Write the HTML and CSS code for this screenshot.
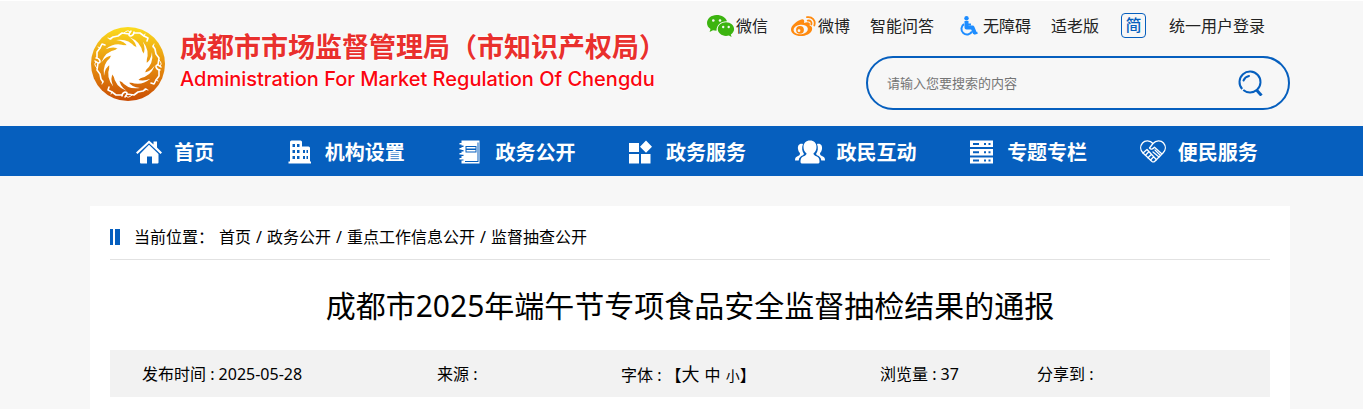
FILE: index.html
```
<!DOCTYPE html>
<html lang="zh-CN">
<head>
    <meta charset="UTF-8">
    <meta name="viewport" content="width=device-width, initial-scale=1.0">
    <title>成都市2025年端午节专项食品安全监督抽检结果的通报</title>
    <link rel="stylesheet" href="styles.css">
</head>
<body>
    <header class="header">
        <div class="container header-inner">
            <a class="logo" href="#">
                <svg class="logo-mark" viewBox="-38 -38 76 76" aria-hidden="true">
                    <defs>
                        <linearGradient id="gold" x1="0" y1="0" x2="0" y2="1">
                            <stop offset="0" stop-color="#fbdc1e"/>
                            <stop offset="0.5" stop-color="#e8920f"/>
                            <stop offset="1" stop-color="#c94c04"/>
                        </linearGradient>
                        <path id="ray" d="M7 -17Q0 -26 -12 -24Q-3 -23 0 -17z"/>
                        <g id="bird" fill="none" stroke="#fff" stroke-linecap="round" stroke-linejoin="round">
                            <path stroke-width="1.6" d="M-18 -25L-15 -27L-10 -28L-6 -31L1 -30M3 -33Q-1 -28 3 -28Q6 -29 6 -32M6 -31L12 -31L16 -28L20 -26L19 -23"/>
                            <path stroke-width="1" d="M-4 -31Q0 -35 2 -32M-17 -25L-20 -26M16 -28L17 -30"/>
                        </g>
                    </defs>
                    <circle r="37" fill="url(#gold)"/>
                    <circle r="19" fill="#fff"/>
                    <g fill="#fff">
                        <use href="#ray"/>
                        <use href="#ray" transform="rotate(30)"/>
                        <use href="#ray" transform="rotate(60)"/>
                        <use href="#ray" transform="rotate(90)"/>
                        <use href="#ray" transform="rotate(120)"/>
                        <use href="#ray" transform="rotate(150)"/>
                        <use href="#ray" transform="rotate(180)"/>
                        <use href="#ray" transform="rotate(210)"/>
                        <use href="#ray" transform="rotate(240)"/>
                        <use href="#ray" transform="rotate(270)"/>
                        <use href="#ray" transform="rotate(300)"/>
                        <use href="#ray" transform="rotate(330)"/>
                    </g>
                    <use href="#bird"/>
                    <use href="#bird" transform="rotate(90)"/>
                    <use href="#bird" transform="rotate(180)"/>
                    <use href="#bird" transform="rotate(270)"/>
                </svg>
                <span class="logo-text">
                    <span class="logo-cn">成都市市场监督管理局（市知识产权局）</span>
                    <span class="logo-en">Administration For Market Regulation Of Chengdu</span>
                </span>
            </a>
            <div class="header-tools">
                <div class="top-links">
                    <a href="#">
                        <svg width="28" height="22" viewBox="0 0 28 22" aria-hidden="true">
                            <path fill="#3cb410" d="M9.500 0C4.300 0 0 3.600 0 8c0 2.500 1.300 4.600 3.500 6l-.9 2.900 3.400-1.700c1.200.3 2.300.5 3.500.5C9.300 10 14 6 20 6.200 19 2.600 14.700 0 9.500 0z"/>
                            <path fill="#3cb410" d="M19 7.200c-4.600 0-8.200 3-8.200 6.800s3.600 6.900 8.200 6.900c1 0 2-.2 2.900-.5L24.600 22l-.8-2.500c2-1.300 3.300-3.200 3.300-5.500 0-3.800-3.500-6.800-8.100-6.800z"/>
                            <g fill="#f7f7f7"><circle cx="6.300" cy="5.500" r="1.300"/><circle cx="13" cy="5.500" r="1.300"/><circle cx="16.200" cy="12" r="1.200"/><circle cx="21.700" cy="12" r="1.200"/></g>
                        </svg>
                        微信
                    </a>
                    <a href="#" class="link-weibo">
                        <svg width="25" height="20" viewBox="0 0 25 20" aria-hidden="true">
                            <path fill="#ff8a0f" d="M9 4C12 2.500 14 3.500 13 7c4-1.500 7-.5 5.600 2.600 2 .6 3 2 2.400 4.300C20 17.500 15 20 9.600 20 4.500 20 0 17.600 0 13.500 0 10 4.500 6 9 4z"/>
                            <ellipse cx="9.700" cy="13.500" rx="7.200" ry="4.800" fill="#f7f7f7" transform="rotate(-8 9.700 13.500)"/>
                            <circle cx="9" cy="13.800" r="3.900" fill="#ff8a0f"/>
                            <circle cx="8" cy="14.700" r="1.400" fill="#f7f7f7"/>
                            <path fill="none" stroke="#ff8a0f" stroke-width="1.800" stroke-linecap="round" d="M16 1.200C21 .2 25 4.500 23.300 9.500M16.700 4.600c2.600-.5 4.300 1.500 3.600 3.900"/>
                        </svg>
                        微博
                    </a>
                    <a href="#">智能问答</a>
                    <a href="#" class="link-access">
                        <svg width="19" height="20" viewBox="0 0 19 20" aria-hidden="true">
                            <circle cx="7.500" cy="2.200" r="2.200" fill="#1e8dff"/>
                            <path fill="none" stroke="#1e8dff" stroke-width="4" stroke-linejoin="round" d="M7.500 5v6.500h6l2.500 6"/>
                            <path fill="none" stroke="#1e8dff" stroke-width="2" d="M7 8.500h5M5 8.200a5.600 5.600 0 1 0 8 7.300M15 17.800l3.500-1"/>
                        </svg>
                        无障碍
                    </a>
                    <a href="#">适老版</a>
                    <button type="button" class="lang-btn">简</button>
                    <a href="#">统一用户登录</a>
                </div>
                <form class="search">
                    <input type="text" aria-label="搜索" placeholder="请输入您要搜索的内容">
                    <button type="submit" aria-label="搜索">
                        <svg width="26" height="26" viewBox="0 0 26 26" fill="none" stroke="#065fbe" stroke-width="2" aria-hidden="true">
                            <circle cx="12" cy="12" r="10.500" stroke-dasharray="64 2" transform="rotate(138 12 12)"/>
                            <path stroke-linecap="round" d="M5.500 10.500Q7 6.800 11 6"/>
                            <path stroke-width="3" d="M18.500 20L23.500 25.500"/>
                        </svg>
                    </button>
                </form>
            </div>
        </div>
    </header>

    <nav class="nav">
        <div class="container nav-list">
            <a href="#">
                <svg viewBox="0 0 26 24" fill="#fff" aria-hidden="true">
                    <path d="M13 4.800L22.500 14v8.500q0 1-1 1H16v-7h-5v7H5q-1 0-1-1V14z"/>
                    <path d="M0 12.500L13 .5l4.500 4V1.500h3.500v6l5 5-1.500 1.500L13 3.200 1.500 14z"/>
                </svg>
                <span>首页</span>
            </a>
            <a href="#">
                <svg viewBox="0 0 26 24" fill="#fff" aria-hidden="true">
                    <path fill-rule="evenodd" d="M3 2q0-1.500 1.500-1.500h9Q15 .5 15 2v4.500h6.500Q23 6.500 23 8v13.500h1v2H1.500v-2H3zM5.500 4v3H8V4zM10 4v3h2.500V4zM5.500 10v3H8v-3zM10 10v3h2.500v-3zM5.500 16v3H8v-3zM10 16v3h2.500v-3zM16 10v3h2v-3zM19.500 10v3H21v-3zM16 16v3h2v-3zM19.500 16v3H21v-3z"/>
                </svg>
                <span>机构设置</span>
            </a>
            <a href="#">
                <svg viewBox="0 0 26 24" fill="#fff" aria-hidden="true">
                    <path fill-rule="evenodd" d="M4.500.5h18v23h-18v-3h2v-1.500h-2V16h2v-1.500h-2v-3h2V10h-2V7h2V5.500h-2zM8.500 6v6.500h11V6z"/>
                    <path d="M9.500 7h9v1.500h-9zM9.500 10h9v1.500h-9zM2.500 3H7v1.500H2.500zM2.500 8H7v1.500H2.500zM2.500 13H7v1.500H2.500zM2.500 18H7v1.500H2.500z"/>
                    <path fill="#065fbe" d="M20.500 2.500h1v19.500H8V21h12.500z"/>
                </svg>
                <span>政务公开</span>
            </a>
            <a href="#">
                <svg viewBox="0 0 26 24" fill="#fff" aria-hidden="true">
                    <path d="M1 3h10v9H1zM1 14h10v9.500H1zM13 14h9.500v9.500H13zM18 .5l6 6.200-6 6-6-6z"/>
                </svg>
                <span>政务服务</span>
            </a>
            <a href="#">
                <svg class="icon-wide" viewBox="0 0 30 24" fill="#fff" aria-hidden="true">
                    <path d="M15 .5c4 0 6.500 2.600 6.500 6.500 0 3-1.200 5-3 6.300 0 2 1.500 2.400 3.500 3.200 2.200 1 2.500 3 2.500 5.500 0 1-1 1.500-2 1.500h-15c-1 0-2-.5-2-1.500 0-2.500.3-4.500 2.500-5.500 2-.8 3.500-1.200 3.500-3.200-1.800-1.300-3-3.300-3-6.300 0-3.900 2.500-6.500 6.500-6.500z"/>
                    <path d="M8 4C4 3 2.500 6 3 9c.3 2 1 3 2 4.200 0 2-1 2.300-2.500 3C.5 17.200 0 18 0 20.500h3.700c.3-3 1.800-4.200 4.300-5.300l1-1.200C7 11 6.500 8 8 4zM22 4c4-1 5.500 2 5 5-.3 2-1 3-2 4.200 0 2 1 2.300 2.500 3 2 1 2.500 1.800 2.500 4.300h-3.700c-.3-3-1.800-4.200-4.300-5.300L21 14c2-3 2.500-6 1-10z"/>
                </svg>
                <span>政民互动</span>
            </a>
            <a href="#">
                <svg viewBox="0 0 26 24" fill="#fff" aria-hidden="true">
                    <path fill-rule="evenodd" d="M1 .5h23v6.500H1zM4 3v2h6V3zM15 3v2h2V3zM19.500 3v2h2V3zM1 9h23v6.500H1zM4 11.200v2h6v-2zM15 11.200v2h2v-2zM19.500 11.200v2h2v-2zM1 17.500h23v6H1zM4 19.500v2h6v-2zM15 19.500v2h2v-2zM19.500 19.500v2h2v-2z"/>
                </svg>
                <span>专题专栏</span>
            </a>
            <a href="#">
                <svg viewBox="0 0 26 24" fill="none" stroke="#fff" stroke-width="1.300" stroke-linecap="round" stroke-linejoin="round" aria-hidden="true">
                    <path d="M13 3.500C10 0 5 0 2.500 3S0 10 3 13l9 8.500q1.500 1 2.800-.3L23 13c3-3 3-7 .5-10S16 0 13 3.500L9.500 8q2 2.500 5-.7L22 14"/>
                    <path d="M3 13l4-3.500 9.500 10.300M5.500 15.200L8.500 12M8 17.700l3-3M10.500 20l3-3M13 12l6 5M15 10l5.500 5.500"/>
                </svg>
                <span>便民服务</span>
            </a>
        </div>
    </nav>

    <main class="main">
        <div class="container content">
            <div class="breadcrumb">
                <span class="breadcrumb-mark"></span>
                <span class="breadcrumb-label">当前位置：</span>
                <a href="#">首页</a><span class="slash">/</span><a href="#">政务公开</a><span class="slash">/</span><a href="#">重点工作信息公开</a><span class="slash">/</span><a href="#">监督抽查公开</a>
            </div>
            <h1>成都市2025年端午节专项食品安全监督抽检结果的通报</h1>
            <div class="meta">
                <span>发布时间 : 2025-05-28</span>
                <span>来源 :</span>
                <span class="font-size">字体 : 【<button type="button" class="size-l">大</button><button type="button" class="size-m">中</button><button type="button" class="size-s">小</button>】</span>
                <span>浏览量 : 37</span>
                <span>分享到 :</span>
            </div>
        </div>
    </main>
</body>
</html>
```
FILE: styles.css
```
* {
    box-sizing: border-box;
}

body {
    margin: 0;
    background: #f7f7f7;
    color: #000;
    font-family: "Noto Sans", "Noto Sans CJK SC", sans-serif;
    font-size: 16px;
    line-height: 24px;
}

a {
    color: inherit;
    text-decoration: none;
}

button {
    padding: 0;
    border: 0;
    background: none;
    color: inherit;
    font-family: inherit;
    cursor: pointer;
}

svg {
    flex: none;
}

.header,
.nav,
.main {
    padding-left: 17px;
}

.container {
    max-width: 1200px;
    margin: 0 auto;
}

/* Header */
.header {
    border-top: 1px solid #fff;
}

.header-inner {
    display: flex;
    justify-content: space-between;
    height: 125px;
}

.logo {
    display: flex;
    align-items: center;
    gap: 14px;
    white-space: nowrap;
}

.logo-mark {
    width: 76px;
    height: 76px;
}

.logo-text {
    display: flex;
    flex-direction: column;
    padding-bottom: 4px;
    text-shadow: 0 0 2px #fff, 0 0 3px #fff;
}

.logo-cn {
    color: #e9302d;
    font-size: 27px;
    font-weight: 700;
    line-height: 34px;
}

.logo-en {
    color: #fb0510;
    font-family: Inter, sans-serif;
    font-size: 20px;
    font-weight: 500;
    line-height: 30px;
}

.header-tools {
    display: flex;
    flex-direction: column;
    align-items: flex-end;
}

.top-links {
    display: flex;
    align-items: center;
    gap: 20px;
    height: 49px;
    padding-right: 25px;
    color: #222;
    white-space: nowrap;
}

.top-links a {
    display: flex;
    align-items: center;
    gap: 1px;
}

.top-links .link-weibo {
    padding-left: 3px;
    gap: 2px;
}

.top-links .link-access {
    padding-left: 5px;
    gap: 5px;
}

.lang-btn {
    width: 25px;
    height: 25px;
    margin: 0 3px 0 2px;
    border: 1px solid #065fbe;
    border-radius: 4px;
    color: #065fbe;
    font-size: 16px;
    font-weight: 500;
    line-height: 23px;
}

.search {
    display: flex;
    align-items: center;
    width: 424px;
    height: 54px;
    margin-top: 6px;
    padding: 0 24px 0 19px;
    border: 2px solid #065fbe;
    border-radius: 27px;
}

.search input {
    flex: 1;
    min-width: 0;
    padding: 0;
    border: 0;
    outline: 0;
    background: none;
    font-family: inherit;
    font-size: 13px;
}

.search input::placeholder {
    color: #757575;
}

.search button {
    height: 26px;
}

.search svg {
    display: block;
}

/* Navigation */
.nav {
    background: #065fbe;
}

.nav-list {
    display: grid;
    grid-template-columns: repeat(7, 1fr);
    padding-right: 6px;
}

.nav a {
    display: flex;
    align-items: center;
    justify-content: center;
    gap: 12px;
    height: 50px;
    padding-top: 2px;
    color: #fff;
    font-size: 20px;
    font-weight: 700;
    line-height: 28px;
    white-space: nowrap;
}

.nav span {
    padding-top: 2px;
}

.nav svg {
    width: 26px;
    height: 24px;
}

.nav .icon-wide {
    width: 30px;
    margin-left: -4px;
}

/* Article */
.main {
    padding-top: 30px;
}

.content {
    padding: 19px 20px 12px;
    background: #fff;
}

.breadcrumb {
    display: flex;
    align-items: center;
    height: 35px;
    padding-bottom: 11px;
    border-bottom: 1px solid #e2e2e2;
    white-space: nowrap;
}

.breadcrumb-mark {
    width: 10px;
    height: 16px;
    margin-right: 14px;
    border: solid #065fbe;
    border-width: 0 5px 0 3px;
}

.breadcrumb-label {
    margin-right: 5px;
}

.slash {
    width: 16px;
    text-align: center;
}

h1 {
    margin: 26px 0 24px;
    font-size: 30px;
    font-weight: 400;
    line-height: 40px;
    text-align: center;
}

.meta {
    display: grid;
    grid-template-columns: 295fr 184fr 259fr 157fr 233fr;
    align-items: center;
    height: 47px;
    padding-left: 32px;
    background: #f2f2f2;
    white-space: nowrap;
}

.font-size button {
    margin-right: 5px;
}

.font-size .size-l {
    font-size: 18px;
}

.font-size .size-m {
    font-size: 16px;
}

.font-size .size-s {
    margin-right: 0;
    font-size: 14px;
}
```
